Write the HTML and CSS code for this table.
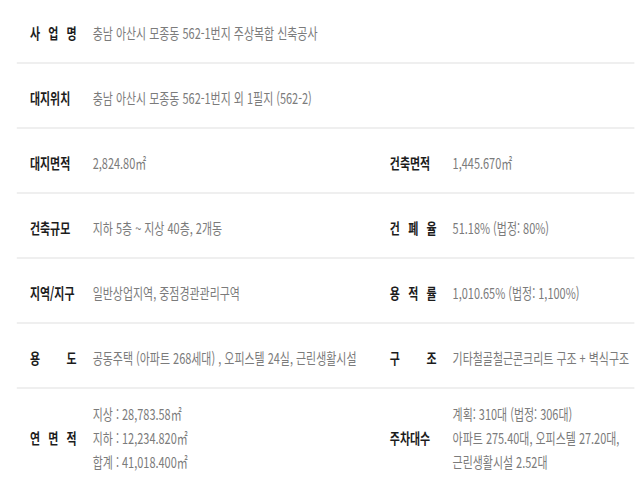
FILE: index.html
```html
<!DOCTYPE html>
<html lang="ko">
<head>
<meta charset="utf-8">
<title>사업개요</title>
<link rel="stylesheet" href="styles.css">
</head>
<body>
<div class="viewport">
<div class="page">
  <div class="sheet">
    <div class="row first">
      <div class="cell"><span class="label">사 업 명</span><span class="value">충남 아산시 모종동 562-1번지 주상복합 신축공사</span></div>
    </div>
    <div class="row">
      <div class="cell"><span class="label">대지위치</span><span class="value">충남 아산시 모종동 562-1번지 외 1필지 (562-2)</span></div>
    </div>
    <div class="row">
      <div class="cell"><span class="label">대지면적</span><span class="value">2,824.80㎡</span></div>
      <div class="cell"><span class="label">건축면적</span><span class="value">1,445.670㎡</span></div>
    </div>
    <div class="row">
      <div class="cell"><span class="label">건축규모</span><span class="value">지하 5층 ~ 지상 40층, 2개동</span></div>
      <div class="cell"><span class="label">건 폐 율</span><span class="value">51.18% (법정: 80%)</span></div>
    </div>
    <div class="row">
      <div class="cell"><span class="label">지역/지구</span><span class="value">일반상업지역, 중점경관관리구역</span></div>
      <div class="cell"><span class="label">용 적 률</span><span class="value">1,010.65% (법정: 1,100%)</span></div>
    </div>
    <div class="row">
      <div class="cell"><span class="label">용 도</span><span class="value">공동주택 (아파트 268세대) , 오피스텔 24실, 근린생활시설</span></div>
      <div class="cell"><span class="label">구 조</span><span class="value">기타철골철근콘크리트 구조 + 벽식구조</span></div>
    </div>
    <div class="row last">
      <div class="cell"><span class="label">연 면 적</span><span class="value multi">지상 : 28,783.58㎡<br>지하 : 12,234.820㎡<br>합계 : 41,018.400㎡</span></div>
      <div class="cell"><span class="label">주차대수</span><span class="value multi">계획: 310대 (법정: 306대)<br>아파트 275.40대, 오피스텔 27.20대,<br>근린생활시설 2.52대</span></div>
    </div>
  </div>
</div>
</div>
</body>
</html>
```

FILE: styles.css
```css
html, body {
  margin: 0;
  padding: 0;
  background: #ffffff;
  overflow: hidden;
}

.viewport {
  width: 640px;
  height: 480px;
  overflow: hidden;
}

.page {
  width: 877px;
  transform: scaleX(0.73);
  transform-origin: 0 0;
  font-family: "Noto Sans CJK KR", "Noto Sans", sans-serif;
  font-size: 15px;
}

.sheet {
  margin-left: 23px;
  width: 846px;
}

.row {
  display: grid;
  grid-template-columns: 493px 1fr;
  height: 63px;
  border-bottom: 2px solid #efefef;
}

.row.first {
  height: 62px;
}

.row.last {
  height: 91px;
  border-bottom: none;
}

.cell {
  display: flex;
  align-items: center;
  padding-left: 18px;
  padding-top: 4px;
}

.row.last .cell {
  padding-top: 6px;
}

.label {
  display: block;
  width: 64px;
  flex: none;
  text-align: justify;
  text-align-last: justify;
  font-weight: 700;
  color: #1c1c1c;
  line-height: 20px;
}

.value {
  display: block;
  margin-left: 22px;
  color: #7b7b7b;
  line-height: 20px;
  white-space: nowrap;
}

.value.multi {
  line-height: 24px;
}
```
